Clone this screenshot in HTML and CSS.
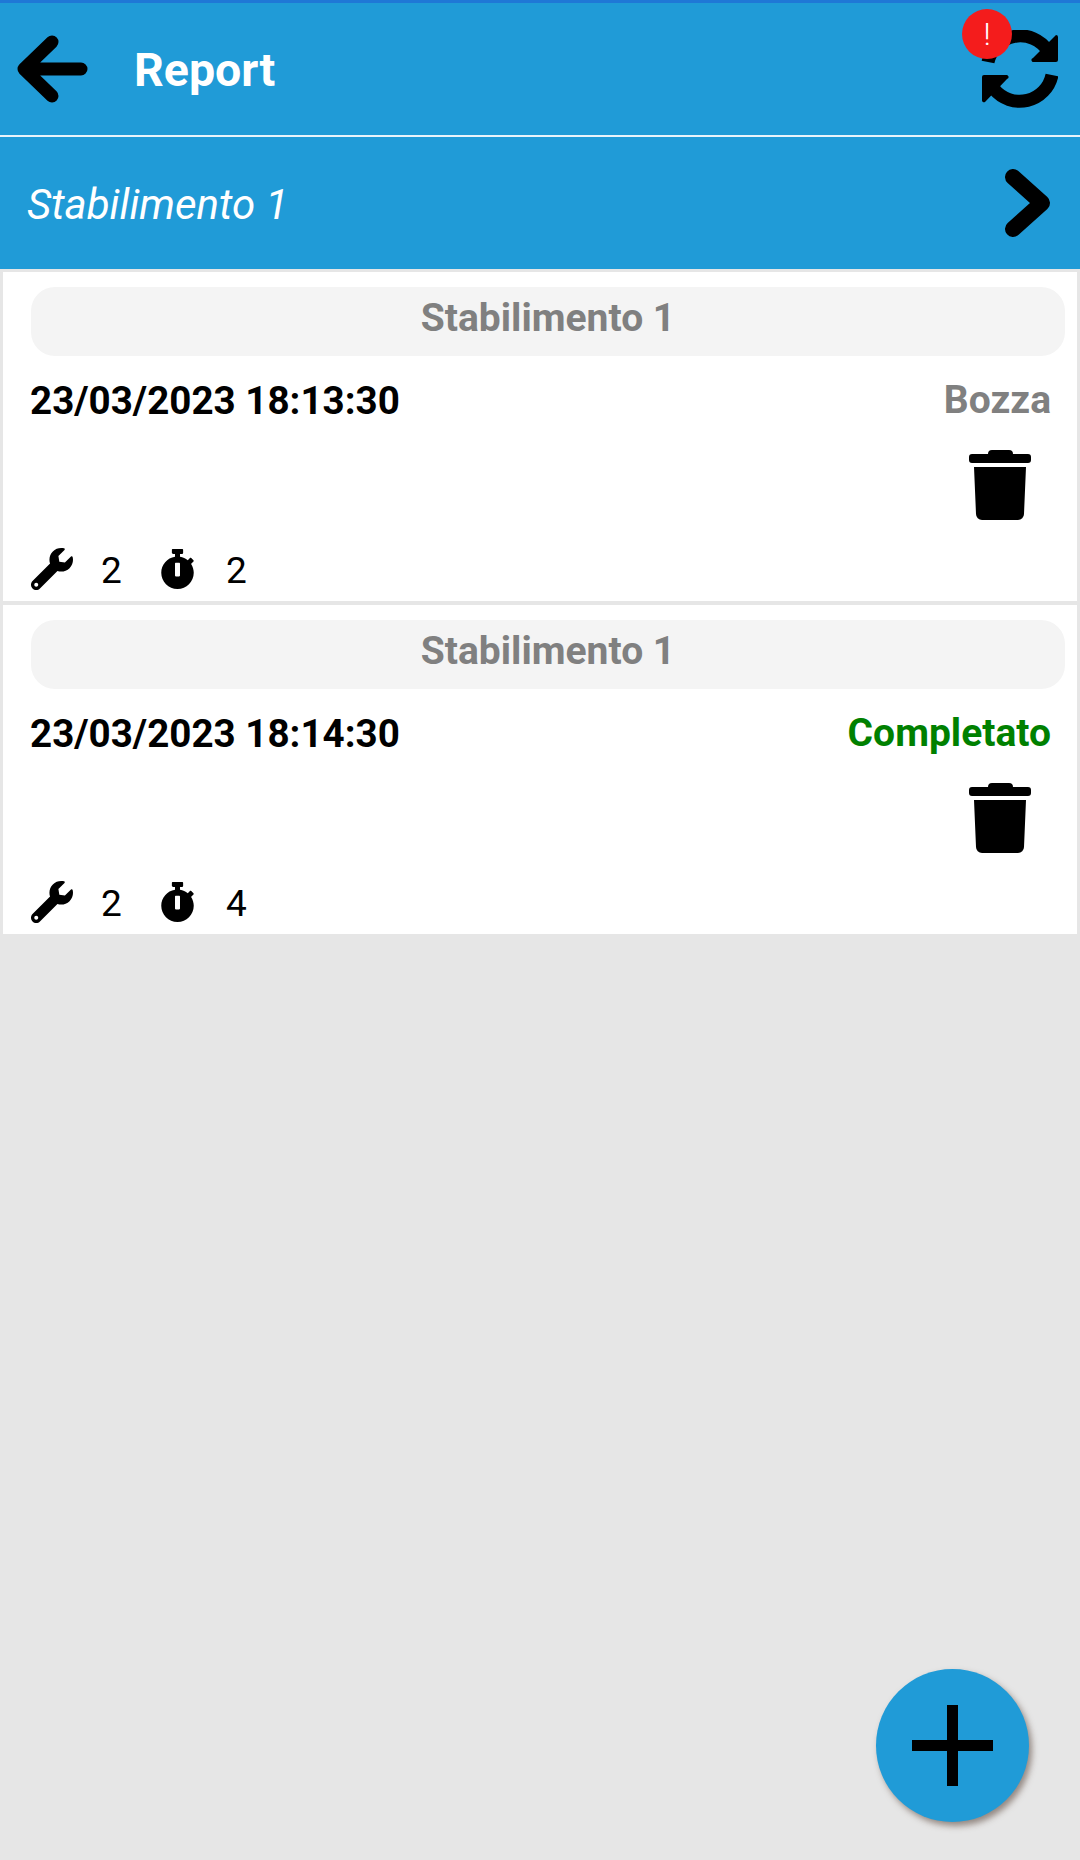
FILE: index.html
```html
<!DOCTYPE html>
<html lang="it">
<head>
<meta charset="utf-8">
<title>Report</title>
<link rel="stylesheet" href="styles.css">
</head>
<body>
<div class="status-strip"></div>
<header class="app-bar">
  <svg class="back-icon" viewBox="0 0 73 72"><path d="M35 9 7 36l28 27M7 36h57" fill="none" stroke="#000" stroke-width="13" stroke-linecap="round" stroke-linejoin="round"/></svg>
  <h1 class="title">Report</h1>
  <div class="sync">
    <svg class="sync-icon" viewBox="0 0 78 78"><path d="M8 32A33 33 0 0 1 68 21M72 45A33 33 0 0 1 14 59" fill="none" stroke="#000" stroke-width="13"/><path d="M76 5a2 2 0 0 1 2 2v23a2 2 0 0 1-2 2H54a2 2 0 0 1-1-4zM4 45h22a2 2 0 0 1 1 4L5 72a2 2 0 0 1-3-2V47a2 2 0 0 1 2-2z"/></svg>
    <span class="badge">!</span>
  </div>
</header>
<div class="plant-bar">
  <span class="plant-name">Stabilimento 1</span>
  <svg class="chevron-icon" viewBox="0 0 46 70"><path d="M8 9l29 26L8 61" fill="none" stroke="#000" stroke-width="16" stroke-linecap="round" stroke-linejoin="round"/></svg>
</div>
<main class="list">
  <article class="card">
    <div class="pill">Stabilimento 1</div>
    <div class="row">
      <span class="date">23/03/2023 18:13:30</span>
      <span class="state state-draft">Bozza</span>
    </div>
    <div class="actions">
      <svg class="trash-icon" viewBox="0 0 62 70"><path d="M23 0h17a4 4 0 0 1 4 4h15a3 3 0 0 1 3 3v3a3 3 0 0 1-3 3H3a3 3 0 0 1-3-3V7a3 3 0 0 1 3-3h16a4 4 0 0 1 4-4zM5 17h52l-2 47a6 6 0 0 1-6 6H13a6 6 0 0 1-6-6z"/></svg>
    </div>
    <div class="stats">
      <svg class="wrench-icon" viewBox="0 0 512 512"><path fill-rule="evenodd" d="M507.73 109.1c-2.24-9.03-13.54-12.09-20.12-5.51l-74.36 74.36-67.88-11.31-11.31-67.88 74.36-74.36c6.62-6.62 3.43-17.9-5.66-20.16-47.38-11.74-99.55.91-136.58 37.93-39.64 39.64-50.55 97.1-34.05 147.2L18.74 402.76c-24.99 24.99-24.99 65.51 0 90.5 24.99 24.99 65.51 24.99 90.5 0l213.21-213.21c50.12 16.71 107.47 5.68 147.37-34.22 37.07-37.07 49.7-89.32 37.91-136.73zM64 472c-13.25 0-24-10.75-24-24 0-13.26 10.75-24 24-24s24 10.74 24 24c0 13.25-10.75 24-24 24z"/></svg>
      <span class="count count-tools">2</span>
      <svg class="watch-icon" viewBox="0 0 448 512"><path d="M432 304c0 114.9-93.1 208-208 208S16 418.9 16 304c0-104 76.3-190.2 176-205.5V64h-28c-6.6 0-12-5.4-12-12V12c0-6.6 5.4-12 12-12h120c6.6 0 12 5.4 12 12v40c0 6.6-5.4 12-12 12h-28v34.5c37.5 5.8 71.7 21.6 99.7 44.6l27.5-27.5c4.7-4.7 12.3-4.7 17 0l28.3 28.3c4.7 4.7 4.7 12.3 0 17l-29.4 29.4-.6.6C419.7 223.3 432 262.2 432 304zm-176 36V188.5c0-6.6-5.4-12-12-12h-40c-6.6 0-12 5.4-12 12V340c0 6.6 5.4 12 12 12h40c6.6 0 12-5.4 12-12z"/></svg>
      <span class="count count-time">2</span>
    </div>
  </article>
  <article class="card">
    <div class="pill">Stabilimento 1</div>
    <div class="row">
      <span class="date">23/03/2023 18:14:30</span>
      <span class="state state-done">Completato</span>
    </div>
    <div class="actions">
      <svg class="trash-icon" viewBox="0 0 62 70"><path d="M23 0h17a4 4 0 0 1 4 4h15a3 3 0 0 1 3 3v3a3 3 0 0 1-3 3H3a3 3 0 0 1-3-3V7a3 3 0 0 1 3-3h16a4 4 0 0 1 4-4zM5 17h52l-2 47a6 6 0 0 1-6 6H13a6 6 0 0 1-6-6z"/></svg>
    </div>
    <div class="stats">
      <svg class="wrench-icon" viewBox="0 0 512 512"><path fill-rule="evenodd" d="M507.73 109.1c-2.24-9.03-13.54-12.09-20.12-5.51l-74.36 74.36-67.88-11.31-11.31-67.88 74.36-74.36c6.62-6.62 3.43-17.9-5.66-20.16-47.38-11.74-99.55.91-136.58 37.93-39.64 39.64-50.55 97.1-34.05 147.2L18.74 402.76c-24.99 24.99-24.99 65.51 0 90.5 24.99 24.99 65.51 24.99 90.5 0l213.21-213.21c50.12 16.71 107.47 5.68 147.37-34.22 37.07-37.07 49.7-89.32 37.91-136.73zM64 472c-13.25 0-24-10.75-24-24 0-13.26 10.75-24 24-24s24 10.74 24 24c0 13.25-10.75 24-24 24z"/></svg>
      <span class="count count-tools">2</span>
      <svg class="watch-icon" viewBox="0 0 448 512"><path d="M432 304c0 114.9-93.1 208-208 208S16 418.9 16 304c0-104 76.3-190.2 176-205.5V64h-28c-6.6 0-12-5.4-12-12V12c0-6.6 5.4-12 12-12h120c6.6 0 12 5.4 12 12v40c0 6.6-5.4 12-12 12h-28v34.5c37.5 5.8 71.7 21.6 99.7 44.6l27.5-27.5c4.7-4.7 12.3-4.7 17 0l28.3 28.3c4.7 4.7 4.7 12.3 0 17l-29.4 29.4-.6.6C419.7 223.3 432 262.2 432 304zm-176 36V188.5c0-6.6-5.4-12-12-12h-40c-6.6 0-12 5.4-12 12V340c0 6.6 5.4 12 12 12h40c6.6 0 12-5.4 12-12z"/></svg>
      <span class="count count-time">4</span>
    </div>
  </article>
</main>
<button class="fab" type="button" aria-label="Aggiungi">
  <svg class="plus-icon" viewBox="0 0 81 81"><path d="M35 0h11v35h35v11H46v35H35V46H0V35h35z"/></svg>
</button>
</body>
</html>
```

FILE: styles.css
```css
html, body {
  margin: 0;
  padding: 0;
}
body {
  position: relative;
  width: 1080px;
  height: 1860px;
  overflow: hidden;
  background: #e6e6e6;
  font-family: Roboto, "Liberation Sans", sans-serif;
  color: #000;
}
svg {
  display: block;
  flex: none;
}
.status-strip {
  height: 3px;
  background: #1f78d6;
}
.app-bar {
  display: flex;
  align-items: center;
  height: 132px;
  padding: 0 22px 0 17px;
  background: #209bd7;
  border-bottom: 2px solid #e8f4fb;
}
.back-icon {
  width: 73px;
  height: 72px;
}
.title {
  flex: 1;
  margin: 2px 0 0 44px;
  font-size: 46.5px;
  font-weight: 700;
  color: #fff;
}
.sync {
  position: relative;
}
.sync-icon {
  width: 78px;
  height: 78px;
}
.badge {
  position: absolute;
  left: -18px;
  top: -21px;
  width: 50px;
  height: 50px;
  border-radius: 50%;
  background: #f41c1c;
  color: #fff;
  font-size: 32px;
  font-weight: 300;
  line-height: 50px;
  text-align: center;
}
.plant-bar {
  display: flex;
  align-items: center;
  justify-content: space-between;
  height: 132px;
  padding: 0 29px 0 27px;
  background: #209bd7;
}
.plant-name {
  margin-top: 2px;
  font-size: 42px;
  font-style: italic;
  font-weight: 400;
  color: #fff;
}
.chevron-icon {
  width: 46px;
  height: 70px;
}
.list {
  display: flex;
  flex-direction: column;
  gap: 4px;
  padding: 3px 3px 0;
}
.card {
  box-sizing: border-box;
  height: 329px;
  padding: 15px 12px 0 28px;
  background: #fff;
}
.pill {
  height: 69px;
  border-radius: 24px;
  background: #f4f4f4;
  color: #808080;
  font-size: 39px;
  font-weight: 700;
  line-height: 62px;
  text-align: center;
}
.row {
  display: flex;
  align-items: center;
  justify-content: space-between;
  height: 44px;
  margin-top: 22px;
  padding-right: 14px;
}
.date {
  margin-left: -1px;
  font-size: 38.6px;
  font-weight: 700;
}
.state {
  font-size: 39px;
  font-weight: 700;
}
.state-draft {
  color: #808080;
}
.state-done {
  color: #008000;
}
.actions {
  display: flex;
  justify-content: flex-end;
  margin-top: 28px;
  padding-right: 34px;
}
.trash-icon {
  width: 62px;
  height: 70px;
}
.stats {
  display: flex;
  align-items: center;
  height: 42px;
  margin-top: 28px;
}
.wrench-icon {
  width: 42px;
  height: 42px;
}
.watch-icon {
  width: 35px;
  height: 40px;
}
.count {
  width: 20px;
  margin-top: 2px;
  font-size: 37px;
}
.count-tools {
  margin-left: 28px;
  margin-right: 39px;
}
.count-time {
  margin-left: 31px;
}
.fab {
  position: absolute;
  left: 876px;
  top: 1669px;
  display: flex;
  align-items: center;
  justify-content: center;
  width: 153px;
  height: 153px;
  padding: 0;
  border: 0;
  border-radius: 50%;
  background: #209bd7;
  box-shadow: 3px 4px 6px rgba(80, 60, 50, 0.55);
}
.plus-icon {
  width: 81px;
  height: 81px;
}
```
